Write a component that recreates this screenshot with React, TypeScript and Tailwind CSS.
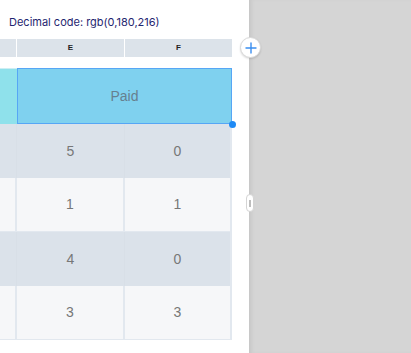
import React from "react"

const rows = [
  { e: "5", f: "0", dark: true },
  { e: "1", f: "1", dark: false },
  { e: "4", f: "0", dark: true },
  { e: "3", f: "3", dark: false },
]

const App: React.FC = () => {
  return (
    <div className="flex w-[411px] h-[353px] overflow-hidden bg-white" style={{ fontFamily: "'Liberation Sans', Arial, sans-serif" }}>
      <div className="relative w-[249px] shrink-0 bg-white">
        <div className="h-[39px] pl-[9px] pt-[15px] text-[11px] leading-[14px] text-[#1f2670]" style={{ fontFamily: "Inter, 'Noto Sans', sans-serif" }}>
          Decimal code: rgb(0,180,216)
        </div>

        <div className="w-[232px]">
          <div className="grid grid-cols-[16px_107px_107px] gap-x-[1px] h-[18px] text-[8px] font-bold text-[#222]">
            <div className="bg-[#dce3ea]" />
            <div className="bg-[#dce3ea] flex items-center justify-center">E</div>
            <div className="bg-[#dce3ea] flex items-center justify-center">F</div>
          </div>

          <div className="h-[11px] bg-white" />

          <div className="grid grid-cols-[17px_215px] h-[56px]">
            <div className="bg-[#8fe1eb] border-t border-[#cdeef3]" />
            <div className="relative bg-[#7fd1ef] border-[1.5px] border-[#56a6f5] flex items-center justify-center text-[14px] text-[#66808f]">
              Paid
              <span className="absolute -right-[5px] -bottom-[5px] w-[7px] h-[7px] rounded-full bg-[#1e8af5]" />
            </div>
          </div>

          {rows.map((r, i) => (
            <div
              key={i}
              className={
                r.dark
                  ? "grid grid-cols-[17px_108px_107px] h-[54px] bg-[#dbe2ea] text-[14px] text-[#777]"
                  : "grid grid-cols-[17px_108px_107px] h-[54px] bg-[#f6f7f9] text-[14px] text-[#777] border-b border-[#e2e8ef]"
              }
            >
              <div className={r.dark ? "border-r border-[#d8dfe7]" : "border-r-2 border-[#e2e8ef]"} />
              <div className={r.dark ? "flex items-center justify-center border-r border-[#d8dfe7]" : "flex items-center justify-center border-r-2 border-[#e2e8ef]"}>
                {r.e}
              </div>
              <div className="flex items-center justify-center border-r-2 border-[#e2e8ef]">{r.f}</div>
            </div>
          ))}
        </div>

        <button className="absolute left-[240px] top-[37px] w-[21px] h-[21px] rounded-full bg-white border border-[#d9d9d9] shadow-[0_1px_2px_rgba(0,0,0,0.15)] flex items-center justify-center z-10">
          <svg width="12" height="12" viewBox="0 0 12 12">
            <path d="M6 1v10M1 6h10" stroke="#3a8ef0" strokeWidth="1.4" strokeLinecap="round" />
          </svg>
        </button>

        <div className="absolute left-[246px] top-[194px] w-[8px] h-[18px] rounded-[4px] bg-white border border-[#d4d4d4] flex items-center justify-center z-10">
          <span className="w-[2px] h-[7px] bg-[#bdbdbd]" />
        </div>
      </div>
      <div className="flex-1 bg-[#d5d5d5] shadow-[inset_4px_0_4px_-2px_rgba(0,0,0,0.08)]" />
    </div>
  )
}

export default App
